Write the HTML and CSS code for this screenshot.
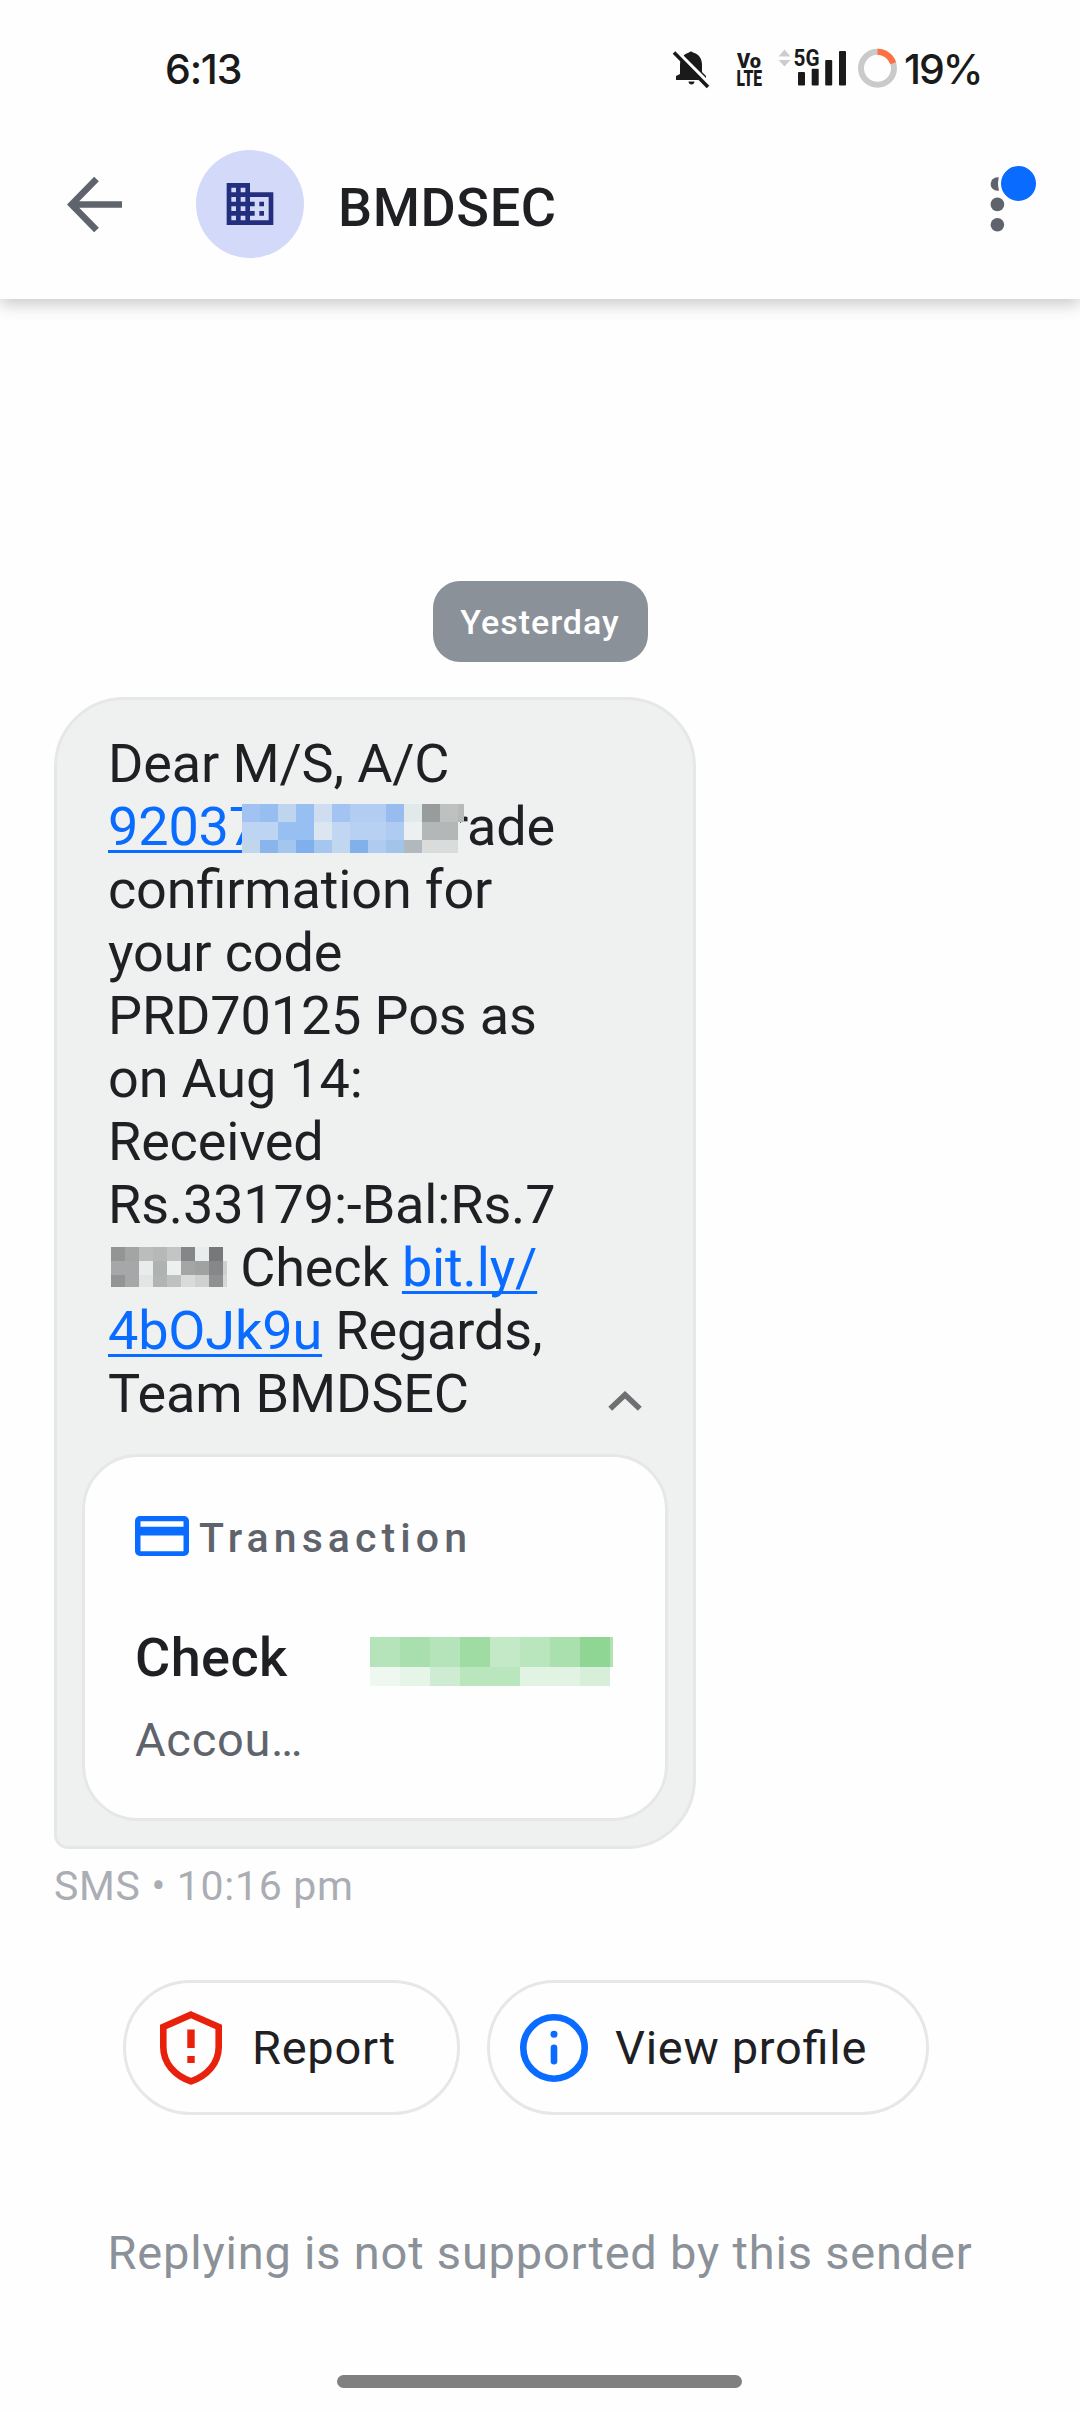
FILE: index.html
```html
<!DOCTYPE html>
<html lang="en">
<head>
<meta charset="utf-8">
<title>BMDSEC</title>
<link rel="stylesheet" href="styles.css">
</head>
<body>
<div class="screen">
  <div class="status">
    <span class="clock">6:13</span>
    <svg class="status-icons" width="228" height="56" viewBox="670 38 228 56">
      <g fill="#1a1a1a">
        <path d="M680 74V65c0-7 4-11 9-12.500a2.500 2.500 0 0 1 4 0c6 1.500 9 6.500 9 12.500v7l4 4v4h-30v-4z"/>
        <path d="M688.500 81.500h6c0 4-6 4-6 0z"/>
        <path d="M676 50.500L709.500 84" stroke="#fff" stroke-width="3.500"/>
        <path d="M674 52.500L708 87" stroke="#1a1a1a" stroke-width="3.600"/>
        <text class="cond" x="737" y="67.500" font-size="21" textLength="24" lengthAdjust="spacingAndGlyphs">Vo</text>
        <text class="cond" x="736.500" y="86" font-size="21.500" textLength="25.500" lengthAdjust="spacingAndGlyphs">LTE</text>
        <text class="cond mid" x="793.500" y="66" font-size="23.500" textLength="26" lengthAdjust="spacingAndGlyphs">5G</text>
        <rect x="798" y="72" width="7" height="13.500" rx="1"/>
        <rect x="811.700" y="68.700" width="7" height="16.800" rx="1"/>
        <rect x="825.200" y="60" width="7" height="25.500" rx="1"/>
        <rect x="839" y="51" width="7" height="34.500" rx="1"/>
      </g>
      <path d="M778.500 56.500l6-7 6 7zM778.500 60h12l-6 6.500z" fill="#ccc"/>
      <circle cx="877.500" cy="68.300" r="16.500" fill="none" stroke="#cacaca" stroke-width="6"/>
      <path d="M877.500 51.800A16.500 16.500 0 0 1 893.200 63.200" fill="none" stroke="#ff7043" stroke-width="6"/>
    </svg>
    <span class="battery">19%</span>
  </div>
  <header class="header">
    <svg class="back" width="56" height="56" viewBox="0 0 56 56" fill="none" stroke="#5f646c" stroke-width="6.600"><path d="M55 28.500H5M29.500 3L4.500 28.500l25 25.500"/></svg>
    <div class="avatar">
      <svg width="56" height="56" viewBox="0 0 24 24" fill="#232f7e"><path d="M12 7V3H2v18h20V7H12zM6 19H4v-2h2v2zm0-4H4v-2h2v2zm0-4H4V9h2v2zm0-4H4V5h2v2zm4 12H8v-2h2v2zm0-4H8v-2h2v2zm0-4H8V9h2v2zm0-4H8V5h2v2zm10 12h-8v-2h2v-2h-2v-2h2v-2h-2V9h8v10zm-2-8h-2v2h2v-2zm0 4h-2v2h2v-2z"/></svg>
    </div>
    <h1 class="title">BMDSEC</h1>
    <svg class="more" width="50" height="72" viewBox="988 162 50 72"><g fill="#5f646c"><circle cx="997.400" cy="184" r="6.800"/><circle cx="997.400" cy="204.400" r="6.800"/><circle cx="997.400" cy="224.700" r="6.800"/></g><circle cx="1018.500" cy="183.500" r="19" fill="#096bff" stroke="#fff" stroke-width="3"/></svg>
  </header>
  <main class="thread">
    <div class="day">Yesterday</div>
    <section class="bubble">
      <p class="message">Dear M/S, A/C<br><a class="link">92037</a><svg class="mask mask-account" width="224" height="49" viewBox="0 0 224 49" shape-rendering="crispEdges">
        <path fill="#a2c2f2" d="M0 0h18v18H0z"/><path fill="#97bef0" d="M18 0h18v18H18z"/><path fill="#bfd5ee" d="M36 0h18v18H36z"/><path fill="#98bff2" d="M54 0h18v18H54z"/><path fill="#cedef0" d="M72 0h18v18H72z"/><path fill="#a3c3f3" d="M90 0h18v18H90z"/><path fill="#b2ccf2" d="M108 0h36v18h-36z"/><path fill="#98bcf0" d="M144 0h18v18h-18z"/><path fill="#e2e9eb" d="M162 0h18v18h-18z"/><path fill="#999c9d" d="M180 0h18v18h-18z"/><path fill="#bfc1c1" d="M198 0h18v18h-18z"/><path fill="#b7bab9" d="M216 0h6v18h-6z"/>
        <path fill="#bdd4f3" d="M0 18h36v18H0z"/><path fill="#98bff2" d="M36 18h36v18H36z"/><path fill="#dce6f0" d="M72 18h18v18H72z"/><path fill="#c1d6f2" d="M90 18h18v18H90z"/><path fill="#b8d0f2" d="M108 18h36v18h-36z"/><path fill="#b0cbf2" d="M144 18h18v18h-18z"/><path fill="#edf0f0" d="M162 18h18v18h-18z"/><path fill="#b4b7b7" d="M180 18h36v18h-36z"/>
        <path fill="#c0d6eb" d="M0 36h18v13H0z"/><path fill="#8ab5ec" d="M18 36h18v13H18z"/><path fill="#a3c6ee" d="M36 36h18v13H36z"/><path fill="#7fafed" d="M54 36h18v13H54z"/><path fill="#a5c6ee" d="M72 36h18v13H72z"/><path fill="#c1d7ee" d="M90 36h18v13H90z"/><path fill="#81b0eb" d="M108 36h18v13h-18z"/><path fill="#afcbf0" d="M126 36h18v13h-18z"/><path fill="#a3c4e9" d="M144 36h18v13h-18z"/><path fill="#b1b8be" d="M162 36h18v13h-18z"/><path fill="#d9dcdb" d="M180 36h36v13h-36z"/>
        <path fill="#eef1f0" d="M216 18h2v31h-2z"/>
      </svg>rade<br>confirmation for<br>your code<br>PRD70125 Pos as<br>on Aug 14:<br>Received<br>Rs.33179:-Bal:Rs.7<br><svg class="mask mask-balance" width="116" height="40" viewBox="0 0 116 40" shape-rendering="crispEdges">
        <path fill="#929594" d="M0 0h14v14H0z"/><path fill="#a3a5a4" d="M14 0h14v14H14z"/><path fill="#bbbdbd" d="M28 0h14v14H28z"/><path fill="#b5b8b7" d="M42 0h14v14H42z"/><path fill="#c2c5c4" d="M56 0h14v14H56z"/><path fill="#848687" d="M70 0h14v14H70z"/><path fill="#e9ecec" d="M84 0h14v14H84z"/><path fill="#777879" d="M98 0h14v14H98z"/>
        <path fill="#a5a7a8" d="M0 14h28v14H0z"/><path fill="#e9ecec" d="M28 14h14v14H28z"/><path fill="#b0b2b2" d="M42 14h14v14H42z"/><path fill="#edf0f0" d="M56 14h14v14H56z"/><path fill="#a4a6a6" d="M70 14h14v14H70z"/><path fill="#a0a2a2" d="M84 14h14v14H84z"/><path fill="#868788" d="M98 14h14v14H98z"/><path fill="#ced0d0" d="M112 14h4v14h-4z"/>
        <path fill="#929594" d="M0 28h14v12H0z"/><path fill="#a5a7a8" d="M14 28h14v12H14z"/><path fill="#e3e5e5" d="M28 28h14v12H28z"/><path fill="#b2b4b4" d="M42 28h14v12H42z"/><path fill="#bfc1c1" d="M56 28h14v12H56z"/><path fill="#d9dbda" d="M70 28h14v12H70z"/><path fill="#cfd1d0" d="M84 28h14v12H84z"/><path fill="#8f9190" d="M98 28h14v12H98z"/><path fill="#d5d8d7" d="M112 28h4v12h-4z"/>
      </svg> Check <a class="link">bit.ly/<br>4bOJk9u</a> Regards,<br>Team BMDSEC</p>
      <svg class="collapse" width="34" height="20" viewBox="0 0 34 20" fill="none" stroke="#6d6f70" stroke-width="5.600"><path d="M2.200 17.800L17 3.800l14.800 14"/></svg>
      <div class="card">
        <div class="card-head">
          <svg width="54" height="40" viewBox="0 0 54 40"><path fill="#096bff" fill-rule="evenodd" d="M5 0h44a5 5 0 0 1 5 5v30a5 5 0 0 1-5 5H5a5 5 0 0 1-5-5V5a5 5 0 0 1 5-5zM5.500 5.300v5.400h43V5.300zM5.500 19.500v15.700h43V19.500z"/></svg>
          <span class="card-label">Transaction</span>
        </div>
        <div class="card-row">
          <span class="card-title">Check</span>
          <svg class="mask-amount" width="243" height="49" viewBox="0 0 243 49" shape-rendering="crispEdges">
            <path fill="#b6e4ba" d="M0 0h30v30H0z"/><path fill="#a9dfae" d="M30 0h30v30H30z"/><path fill="#b6e4ba" d="M60 0h30v30H60z"/><path fill="#9edca4" d="M90 0h30v30H90z"/><path fill="#c3e9c6" d="M120 0h30v30h-30z"/><path fill="#b9e6bc" d="M150 0h30v30h-30z"/><path fill="#aadfae" d="M180 0h30v30h-30z"/><path fill="#8fd695" d="M210 0h30v30h-30z"/><path fill="#b0e2b4" d="M240 0h3v30h-3z"/>
            <path fill="#eff8f0" d="M0 30h30v19H0z"/><path fill="#e5f5e7" d="M30 30h30v19H30z"/><path fill="#ceecd1" d="M60 30h30v19H60z"/><path fill="#bae6be" d="M90 30h60v19H90z"/><path fill="#e1f3e2" d="M150 30h60v19h-60z"/><path fill="#d7efd9" d="M210 30h30v19h-30z"/>
          </svg>
        </div>
        <div class="card-sub">Accou…</div>
      </div>
    </section>
    <div class="meta">SMS • 10:16 pm</div>
    <div class="actions">
      <button class="chip chip-report">
        <svg width="62" height="74" viewBox="0 0 62 74"><path d="M31 3.700L58.700 16v20c0 16-11.500 29-27.700 34.300C14.800 65 3.300 52 3.300 36V16z" fill="none" stroke="#e8210c" stroke-width="6.600"/><path d="M27.300 18.500h7.400V37h-7.400zM27.300 45h7.400v7h-7.400z" fill="#e8210c"/></svg>
        <span class="chip-text">Report</span>
      </button>
      <button class="chip chip-profile">
        <svg width="68" height="68" viewBox="0 0 68 68"><circle cx="34" cy="34" r="30.700" fill="none" stroke="#096bff" stroke-width="6.600"/><circle cx="34" cy="20.300" r="3.500" fill="#096bff"/><rect x="30.700" y="30.500" width="6.600" height="20" rx="3.300" fill="#096bff"/></svg>
        <span class="chip-text">View profile</span>
      </button>
    </div>
    <p class="notice">Replying is not supported by this sender</p>
  </main>
  <div class="home-bar"></div>
</div>
</body>
</html>
```
FILE: styles.css
```css
* { box-sizing: border-box; }
body { margin: 0; background: #fefefe; font-family: Roboto, "Noto Sans", sans-serif; font-feature-settings: "liga" 1; color: #1f2023; }
svg { display: block; flex: none; }
.screen { width: 1080px; height: 2412px; display: flex; flex-direction: column; overflow: hidden; }

.status { height: 110px; padding: 38px 0 0 165px; display: flex; align-items: flex-start; background: #fefefe; }
.clock, .battery { padding-top: 7px; font: 450 41px/48px Inter, sans-serif; color: #1a1a1a; white-space: nowrap; }
.clock { width: 505px; letter-spacing: -1.200px; }
.battery { margin-left: 6px; letter-spacing: -2px; }
.cond { font-family: Roboto, sans-serif; font-weight: 900; }
.mid { font-weight: 700; }

.header { height: 189px; padding: 0 42px 2px 67px; display: flex; align-items: center; background: #fefefe; box-shadow: 0 5px 16px rgba(0, 0, 0, .22); clip-path: inset(0 0 -40px 0); }
.avatar { width: 108px; height: 108px; margin-left: 73px; border-radius: 50%; background: #d3d9f9; display: flex; align-items: center; justify-content: center; }
.title { flex: 1; margin: 0; padding: 8px 0 0 34px; font-size: 54px; line-height: 63px; font-weight: 500; letter-spacing: .600px; }
.more { margin-bottom: 12px; }

.thread { flex: 1; padding: 282px 54px 0; display: flex; flex-direction: column; align-items: flex-start; }
.day { align-self: center; width: 215px; height: 81px; padding-top: 22px; border-radius: 27px; background: #8b9198; color: #fff; font-size: 34px; line-height: 39px; font-weight: 500; letter-spacing: 1px; text-align: center; }
.bubble { position: relative; width: 642px; height: 1152px; margin-top: 35px; padding: 32px 25px 0; border: 3px solid #e6e8e8; border-radius: 70px 70px 70px 14px; background: #eef1f0; }
.message { margin: 0 0 29px 26px; font-size: 54px; line-height: 63px; letter-spacing: -.150px; white-space: nowrap; }
.link { color: #096bff; text-decoration: underline; text-decoration-thickness: 3px; text-underline-offset: 5px; text-decoration-skip-ink: none; }
.mask { display: inline-block; position: relative; }
.mask-account { margin: 0 -16px 0 -17px; vertical-align: -8px; }
.mask-balance { margin-left: 3px; vertical-align: -1px; }
.collapse { position: absolute; right: 51px; top: 691px; }
.card { width: 586px; height: 367px; padding: 58px 52px 0 50px; border: 3px solid #e6e8e8; border-radius: 56px; background: #fefefe; }
.card-head { height: 47px; display: flex; align-items: flex-start; gap: 10px; }
.card-head svg { margin-top: 1px; }
.card-label { font-size: 41px; line-height: 47px; font-weight: 500; letter-spacing: 5.100px; color: #5f646c; }
.card-row { margin-top: 64px; height: 63px; display: flex; justify-content: space-between; align-items: center; }
.card-title { font-size: 54px; line-height: 63px; font-weight: 500; letter-spacing: .400px; }
.mask-amount { margin-top: 7px; }
.card-sub { margin-top: 24px; font-size: 47px; line-height: 53px; letter-spacing: .700px; color: #5f646c; }
.meta { margin-top: 14px; font-size: 41px; line-height: 47px; letter-spacing: .700px; color: #aaadb3; }
.actions { margin: 70px 0 0 69px; display: flex; gap: 27px; }
.chip { height: 135px; padding: 0 0 0 34px; border: 3px solid #e6e8e8; border-radius: 68px; background: #fefefe; display: flex; align-items: center; font: 400 47px/53px Roboto, sans-serif; font-feature-settings: "liga" 1; letter-spacing: .700px; color: #1f2023; }
.chip-report { width: 337px; gap: 30px; }
.chip-profile { width: 442px; padding-left: 30px; gap: 27px; }
.chip-text { white-space: nowrap; }
.notice { align-self: center; margin: 111px 0 0; font-size: 47px; line-height: 53px; letter-spacing: .800px; color: #8b9198; white-space: nowrap; }
.home-bar { width: 405px; height: 13px; margin: 0 0 24px 337px; border-radius: 7px; background: #808080; flex: none; }
```
